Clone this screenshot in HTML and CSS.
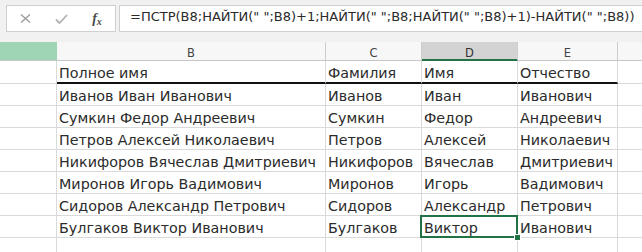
FILE: index.html
```html
<!DOCTYPE html>
<html lang="ru">
<head>
    <meta charset="UTF-8">
    <title>ПСТР и НАЙТИ</title>
    <link rel="stylesheet" href="styles.css">
</head>
<body>
    <div class="formula-bar">
        <div class="fn-box">
            <span class="fn-icon">
                <svg width="11" height="9" viewBox="0 0 11 9"><path d="M1 0.5 L10 8.5 M10 0.5 L1 8.5" stroke="#9b9b9b" stroke-width="1.3" fill="none"/></svg>
            </span>
            <span class="fn-icon">
                <svg width="13" height="10" viewBox="0 0 13 10"><path d="M1 5.5 L4.5 9 L12 1" stroke="#b3b3b3" stroke-width="1.8" fill="none"/></svg>
            </span>
            <span class="fn-icon fx">f<span class="fx-x">x</span></span>
        </div>
        <div class="formula-input">=ПСТР(B8;НАЙТИ(" ";B8)+1;НАЙТИ(" ";B8;НАЙТИ(" ";B8)+1)-НАЙТИ(" ";B8))</div>
    </div>

    <table class="sheet">
        <colgroup>
            <col class="col-a">
            <col class="col-b">
            <col class="col-c">
            <col class="col-d">
            <col class="col-e">
            <col>
        </colgroup>
        <tr class="head">
            <th class="head-a"></th>
            <th>B</th>
            <th>C</th>
            <th class="head-sel">D</th>
            <th>E</th>
            <th></th>
        </tr>
        <tr class="title-row">
            <td></td>
            <td>Полное имя</td>
            <td>Фамилия</td>
            <td>Имя</td>
            <td>Отчество</td>
            <td></td>
        </tr>
        <tr>
            <td></td>
            <td>Иванов Иван Иванович</td>
            <td>Иванов</td>
            <td>Иван</td>
            <td>Иванович</td>
            <td></td>
        </tr>
        <tr>
            <td></td>
            <td>Сумкин Федор Андреевич</td>
            <td>Сумкин</td>
            <td>Федор</td>
            <td>Андреевич</td>
            <td></td>
        </tr>
        <tr>
            <td></td>
            <td>Петров Алексей Николаевич</td>
            <td>Петров</td>
            <td>Алексей</td>
            <td>Николаевич</td>
            <td></td>
        </tr>
        <tr>
            <td></td>
            <td>Никифоров Вячеслав Дмитриевич</td>
            <td>Никифоров</td>
            <td>Вячеслав</td>
            <td>Дмитриевич</td>
            <td></td>
        </tr>
        <tr>
            <td></td>
            <td>Миронов Игорь Вадимович</td>
            <td>Миронов</td>
            <td>Игорь</td>
            <td>Вадимович</td>
            <td></td>
        </tr>
        <tr>
            <td></td>
            <td>Сидоров Александр Петрович</td>
            <td>Сидоров</td>
            <td>Александр</td>
            <td>Петрович</td>
            <td></td>
        </tr>
        <tr>
            <td></td>
            <td>Булгаков Виктор Иванович</td>
            <td>Булгаков</td>
            <td class="active">Виктор</td>
            <td>Иванович</td>
            <td></td>
        </tr>
        <tr>
            <td></td>
            <td></td>
            <td></td>
            <td></td>
            <td></td>
            <td></td>
        </tr>
    </table>
</body>
</html>
```

FILE: styles.css
```css
body {
    margin: 0;
    background-color: #f1f1f1;
    font-family: "DejaVu Sans", sans-serif;
    color: #2b2b2b;
    overflow: hidden;
}

/* formula bar */
.formula-bar {
    display: flex;
    height: 27px;
    padding: 5px 0 0 6px;
}
.fn-box {
    display: flex;
    width: 110px;
    box-sizing: border-box;
    border: 1px solid #cfcfcf;
    background-color: #fff;
}
.fn-icon {
    width: 36px;
    display: flex;
    align-items: center;
    justify-content: center;
}
.fx {
    font-family: "Liberation Serif", serif;
    font-style: italic;
    font-weight: bold;
    font-size: 14px;
    color: #4a4a4a;
    padding-top: 1px;
}
.fx-x {
    font-size: 10px;
    margin-top: 5px;
}
.formula-input {
    flex: 1;
    margin-left: 3px;
    margin-right: -2px;
    border: 1px solid #cfcfcf;
    background-color: #fff;
    padding-left: 10px;
    font-size: 13px;
    line-height: 21px;
    color: #2a2a2a;
    white-space: nowrap;
    overflow: hidden;
}

/* sheet grid */
.sheet {
    margin-top: 10px;
    width: 660px;
    table-layout: fixed;
    border-collapse: separate;
    border-spacing: 0;
    background-color: #fff;
}
.col-a { width: 57px; }
.col-b { width: 269px; }
.col-c { width: 96px; }
.col-d { width: 96px; }
.col-e { width: 100px; }

.sheet th,
.sheet td {
    border-right: 1px solid #dadada;
    border-bottom: 1px solid #dadada;
    padding: 0 0 0 2px;
    vertical-align: bottom;
    white-space: nowrap;
    overflow: visible;
}
.sheet tr { height: 22px; }
.sheet td {
    font-size: 14.3px;
    line-height: 18px;
}

.head { height: 19px !important; }
.head th {
    background-color: #f7f7f7;
    border-right-color: #cdcdcd;
    border-bottom-color: #c6c6c6;
    font-weight: normal;
    font-size: 11.5px;
    line-height: 14px;
    color: #444;
    text-align: center;
    padding: 0;
}
.head .head-a {
    background-color: #9fd4b4;
    border-right-color: #9fd4b4;
}
.head .head-sel {
    background-color: #d3d3d3;
    border-bottom-color: #217346;
    box-shadow: inset 0 -1px #217346;
    color: #333;
}

.title-row { height: 23px !important; }
.title-row td:nth-child(n+2):nth-child(-n+5) {
    border-bottom: 2px solid #111;
}

/* active cell D8 */
.sheet td.active {
    position: relative;
}
.active::after {
    content: "";
    position: absolute;
    left: -2px;
    top: -1px;
    right: -1px;
    bottom: -1px;
    border: 2px solid #217346;
}
.active::before {
    content: "";
    position: absolute;
    right: -4px;
    bottom: -4px;
    width: 5px;
    height: 5px;
    background-color: #217346;
    border: 1px solid #fff;
    z-index: 1;
}
```
